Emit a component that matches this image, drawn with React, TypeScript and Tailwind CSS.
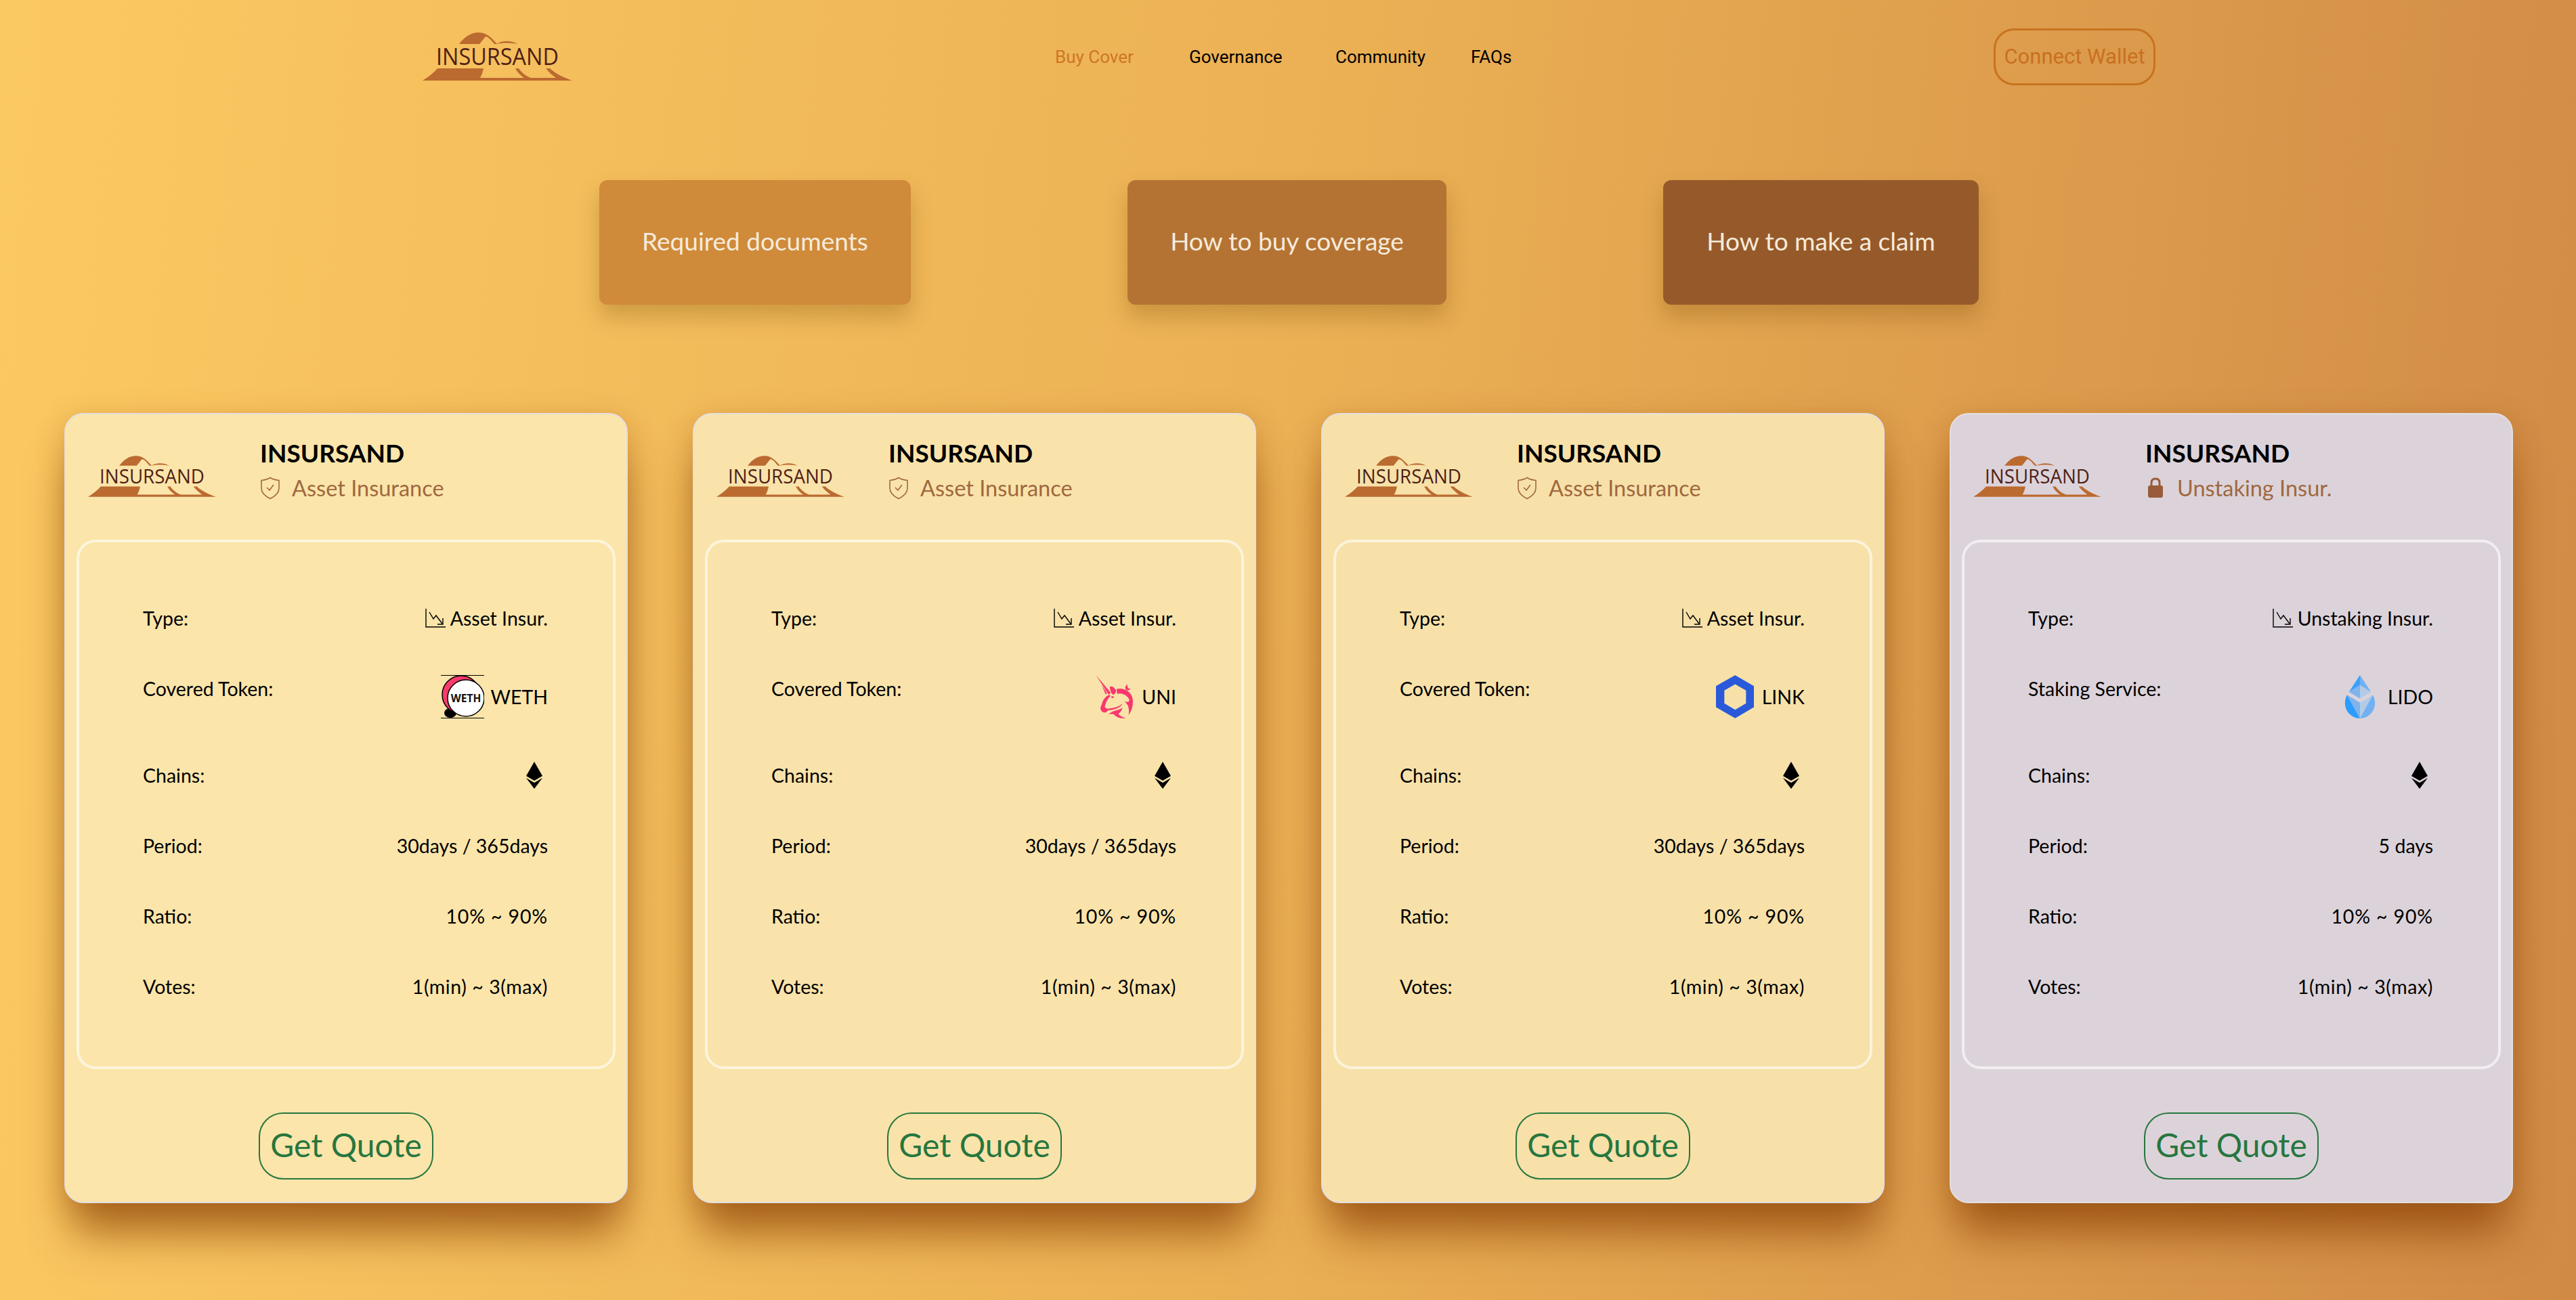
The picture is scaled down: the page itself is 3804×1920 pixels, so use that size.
import { ReactNode } from "react";

function Logo({ className }: { className: string }) {
  return (
    <svg viewBox="0 0 221 71" className={className}>
      <path d="M54 17C62 6 72 0 83 0C95 0 103 9 110 17L106 17C102 12 97 6 93 6L84 17Z" fill="#bb6a30" />
      <path d="M109 17C117 12 130 11 140 17C130 15 118 15 109 17Z" fill="#bb6a30" />
      <path
        d="M22 53L90 53C89 59 87 63 85 67L150 67C144 63 140 59 137 53L142 53C146 59 153 65 160 67L197 67C191 63 186 58 182 53L188 53C195 60 207 66 221 71L0 71C9 65 16 60 22 53Z"
        fill="#bb6a30"
      />
      <text
        x="20"
        y="48"
        textLength="181"
        lengthAdjust="spacingAndGlyphs"
        fontFamily="Open Sans, sans-serif"
        fontWeight="400"
        fontSize="35"
        fill="#4f2015"
      >
        INSURSAND
      </text>
    </svg>
  );
}

function TrendIcon() {
  return (
    <svg viewBox="0 0 30 30" className="w-[30px] h-[30px]" fill="none" stroke="#000" strokeWidth="1.4">
      <path d="M1 1V28H30" />
      <path d="M6 6L12 16L16 11L25 23" />
      <path d="M26 15V24H18" />
    </svg>
  );
}

function EthIcon() {
  return (
    <svg viewBox="0 0 40 40" className="w-10 h-10">
      <path d="M20 0L32 21L20 28L8 21Z" fill="#000" />
      <path d="M8 24L20 31L32 24L20 40Z" fill="#000" />
    </svg>
  );
}

function WethIcon() {
  return (
    <svg viewBox="0 0 64 64" className="w-16 h-16">
      <path d="M0 0.5H64M0 63.5H64" stroke="#000" strokeWidth="1" />
      <ellipse cx="14" cy="56" rx="9" ry="7" fill="#000" />
      <circle cx="30" cy="29" r="28" fill="#f73c6c" stroke="#000" strokeWidth="1.5" />
      <circle cx="37" cy="34" r="27" fill="#fff" stroke="#000" strokeWidth="1.5" />
      <text x="37" y="40" textAnchor="middle" fontFamily="Open Sans, sans-serif" fontWeight="700" fontSize="15.5" fill="#111">
        WETH
      </text>
    </svg>
  );
}

function UniIcon() {
  return (
    <svg viewBox="0 0 167 192" className="w-[56px] h-16" fill="#f9366f">
      <path d="M0 0L66 78L58 88Z" />
      <path d="M26 44L50 80L44 86Z" />
      <path d="M62 52C72 46 84 58 90 68C88 82 80 90 72 84C66 75 62 62 62 52Z" />
      <path d="M58 88C45 95 32 108 28 125L22 140C18 150 24 164 38 166C50 166 54 155 60 150C50 148 42 148 40 140C44 125 50 105 66 92Z" />
      <path d="M92 62C115 55 145 65 158 90C170 115 165 150 145 178C150 150 145 130 126 116C140 120 150 122 148 108C135 85 110 78 95 84Z" />
      <path d="M50 150C75 145 100 145 118 126C112 145 85 152 60 156Z" />
      <path d="M58 172C80 155 100 158 118 145C115 160 105 168 100 172C108 182 122 190 135 190C115 196 88 186 80 174C72 170 65 175 58 172Z" />
      <path d="M130 55L138 40L142 58L155 62L142 68L134 66Z" />
      <ellipse cx="74" cy="98" rx="6" ry="4" />
    </svg>
  );
}

function LinkIcon() {
  return (
    <svg viewBox="0 0 168 191" className="w-[56px] h-16">
      <path
        fillRule="evenodd"
        d="M85 0L168 48V142L85 191L0 142V48ZM85 40L37 68V125L85 153L133 125V68Z"
        fill="#2a5ada"
      />
    </svg>
  );
}

function LidoIcon() {
  return (
    <svg viewBox="0 0 138 192" className="w-[46px] h-16">
      <path d="M69 0L20 75L69 45Z" fill="#3da0fb" />
      <path d="M69 0L118 75L69 45Z" fill="#6fb2f5" />
      <path d="M20 75L69 45V104Z" fill="#7fb3ec" />
      <path d="M118 75L69 45V104Z" fill="#b3cbe6" />
      <path d="M12 88L69 192C20 192 -15 140 12 88Z" fill="#2d9cff" />
      <path d="M12 88L69 122V192Z" fill="#7fb3ec" />
      <path d="M126 88L69 122V192Z" fill="#b3cbe6" />
      <path d="M126 88L69 192C118 192 153 140 126 88Z" fill="#72b1f1" />
    </svg>
  );
}

function ShieldIcon() {
  return (
    <svg viewBox="0 0 30 34" className="w-[30px] h-[34px]" fill="none" stroke="#a0683f" strokeWidth="1.6">
      <path d="M15 1.5C19 4 23 5 28 5.5V17C28 24 22 29 15 32.5C8 29 2 24 2 17V5.5C7 5 11 4 15 1.5Z" />
      <path d="M10 16L14 20L20 12" />
    </svg>
  );
}

function LockIcon() {
  return (
    <svg viewBox="0 0 30 34" className="w-[30px] h-[34px]">
      <path d="M9 14V9C9 5 11 3 15 3C19 3 21 5 21 9V14" fill="none" stroke="#985c3a" strokeWidth="3" />
      <rect x="4" y="13" width="22" height="18" rx="3" fill="#985c3a" />
    </svg>
  );
}

function Row({ label, children, start }: { label: string; children: ReactNode; start?: boolean }) {
  return (
    <div className={start ? "flex justify-between items-start" : "flex justify-between items-center"}>
      <span className="leading-10">{label}</span>
      <div className="flex items-center">{children}</div>
    </div>
  );
}

type CardData = {
  bg: string;
  sub: string;
  icon: ReactNode;
  typeText: string;
  tokenLabel: string;
  tokenIcon: ReactNode;
  token: string;
  gap: string;
  period: string;
};

const cards: CardData[] = [
  {
    bg: "bg-[#fbe5aa]",
    sub: "Asset Insurance",
    icon: <ShieldIcon />,
    typeText: "Asset Insur.",
    tokenLabel: "Covered Token:",
    tokenIcon: <WethIcon />,
    token: "WETH",
    gap: "gap-[9px]",
    period: "30days / 365days",
  },
  {
    bg: "bg-[#f9e3aa]",
    sub: "Asset Insurance",
    icon: <ShieldIcon />,
    typeText: "Asset Insur.",
    tokenLabel: "Covered Token:",
    tokenIcon: <UniIcon />,
    token: "UNI",
    gap: "gap-3",
    period: "30days / 365days",
  },
  {
    bg: "bg-[#f7e1a9]",
    sub: "Asset Insurance",
    icon: <ShieldIcon />,
    typeText: "Asset Insur.",
    tokenLabel: "Covered Token:",
    tokenIcon: <LinkIcon />,
    token: "LINK",
    gap: "gap-3",
    period: "30days / 365days",
  },
  {
    bg: "bg-[#dcd3da]",
    sub: "Unstaking Insur.",
    icon: <LockIcon />,
    typeText: "Unstaking Insur.",
    tokenLabel: "Staking Service:",
    tokenIcon: <LidoIcon />,
    token: "LIDO",
    gap: "gap-[18px]",
    period: "5 days",
  },
];

function Card({ card }: { card: CardData }) {
  return (
    <div
      className={`${card.bg} w-[832px] h-[1167px] rounded-[28px] border-2 border-[#e3dfe2] shadow-[0_56px_64px_-12px_rgba(140,65,5,0.7),0_8px_40px_rgba(160,90,20,0.3)] pt-[34px] flex flex-col items-center`}
    >
      <div className="w-full h-[151px] flex pl-[33px]">
        <Logo className="w-[189px] h-[61px] mt-[27px]" />
        <div className="ml-[65px] flex flex-col">
          <span className="text-[37px] leading-[46px] font-bold text-black">INSURSAND</span>
          <div className="flex items-center gap-[17px] mt-[9px] text-[#a0683f] text-[32.5px] leading-10">
            {card.icon}
            <span>{card.sub}</span>
          </div>
        </div>
      </div>
      <div className="w-[796px] h-[782px] rounded-[28px] border-4 border-white/60 pl-[94px] pr-[96px] pt-[92px] flex flex-col gap-16 text-[28.5px] text-black">
        <Row label="Type:">
          <div className="flex items-center gap-[7px]">
            <TrendIcon />
            <span className="leading-10">{card.typeText}</span>
          </div>
        </Row>
        <Row label={card.tokenLabel} start>
          <div className={`flex items-center ${card.gap}`}>
            {card.tokenIcon}
            <span>{card.token}</span>
          </div>
        </Row>
        <Row label="Chains:">
          <EthIcon />
        </Row>
        <Row label="Period:">
          <span className="leading-10">{card.period}</span>
        </Row>
        <Row label="Ratio:">
          <span className="leading-10 tracking-[0.03em]">10% ~ 90%</span>
        </Row>
        <Row label="Votes:">
          <span className="leading-10 tracking-[0.02em]">1(min) ~ 3(max)</span>
        </Row>
      </div>
      <button className="mt-[64px] w-[258px] h-[99px] pb-[4px] rounded-[36px] border-2 border-[#27763f] text-[#27763f] text-[48px]">
        Get Quote
      </button>
    </div>
  );
}

export default function App() {
  return (
    <div className="w-[3804px] h-[1920px] overflow-hidden bg-[linear-gradient(96deg,#fbc962_0%,#ebb054_50%,#d08a46_100%)] font-[Lato,sans-serif]">
      <nav className="h-[167px] pl-[624px] flex items-center">
        <Logo className="w-[221px] h-[71px] mt-[-1px]" />
        <div className="ml-[713px] mt-[2px] flex items-center text-[26px] text-black font-[Roboto,sans-serif]">
          <span className="w-[198px] text-[#cd7626]">Buy Cover</span>
          <span className="w-[216px]">Governance</span>
          <span className="w-[200px]">Community</span>
          <span>FAQs</span>
        </div>
        <button className="absolute left-[2944px] top-[42px] w-[239px] h-[84px] rounded-[30px] border-[3px] border-[#c8731f] text-[#c8701f] text-[31px] font-[Roboto,sans-serif]">
          Connect Wallet
        </button>
      </nav>
      <div className="mt-[99px] pl-[885px] flex gap-[320px] text-[37px] text-[#f6ebdc]">
        <div className="w-[460px] h-[184px] pb-[4px] rounded-xl bg-[#cf8a3a] shadow-[0_18px_32px_rgba(110,70,0,0.28)] flex items-center justify-center">
          Required documents
        </div>
        <div className="w-[471px] h-[184px] pb-[4px] rounded-xl bg-[#b57333] shadow-[0_18px_32px_rgba(110,70,0,0.28)] flex items-center justify-center">
          How to buy coverage
        </div>
        <div className="w-[466px] h-[184px] pb-[4px] rounded-xl bg-[#965a2a] shadow-[0_18px_32px_rgba(110,70,0,0.28)] flex items-center justify-center">
          How to make a claim
        </div>
      </div>
      <div className="mt-[160px] pl-[95px] flex gap-24">
        {cards.map((c, i) => (
          <Card key={i} card={c} />
        ))}
      </div>
    </div>
  );
}
